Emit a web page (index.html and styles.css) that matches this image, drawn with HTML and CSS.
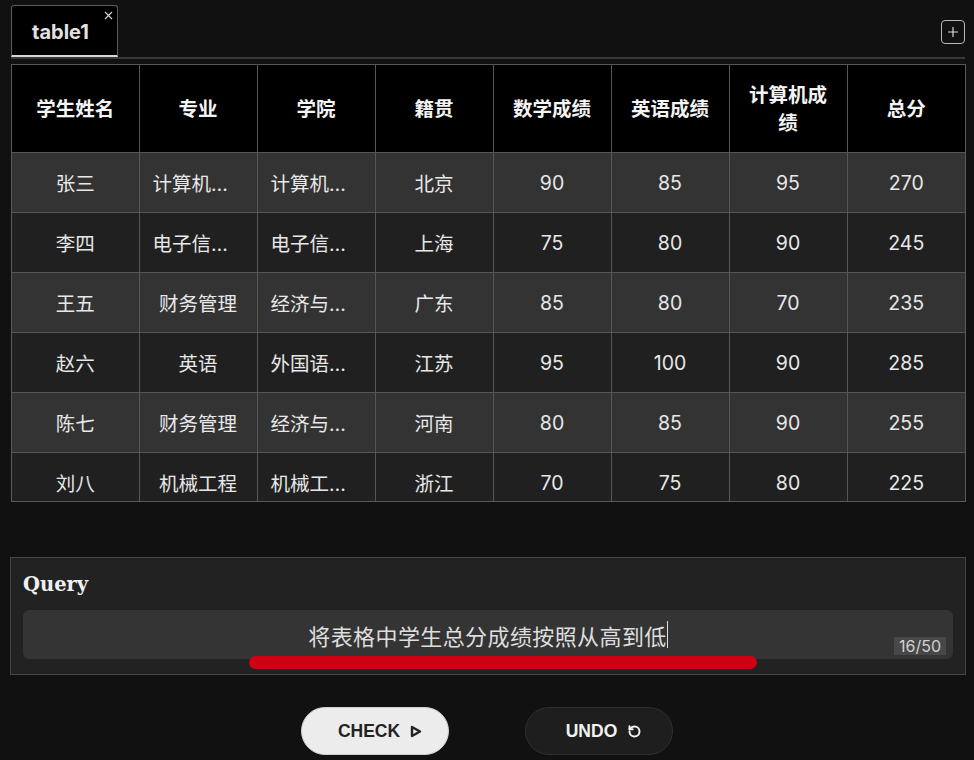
FILE: index.html
```html
<!DOCTYPE html>
<html lang="zh">
<head>
<meta charset="utf-8">
<title>table1</title>
<link rel="stylesheet" href="styles.css">
</head>
<body>
<div class="app">
  <div class="tabbar">
    <div class="tab">
      <span class="tab-title">table1</span>
      <span class="tab-close">
        <svg width="9" height="9" viewBox="0 0 9 9"><path d="M1 1L8 8M8 1L1 8" stroke="#cfcfcf" stroke-width="1.2" fill="none"/></svg>
      </span>
    </div>
    <div class="add-btn">
      <svg width="12" height="12" viewBox="0 0 12 12"><path d="M6 1V11M1 6H11" stroke="#d8d8d8" stroke-width="1.2" fill="none"/></svg>
    </div>
  </div>

  <div class="table-wrap">
    <table class="grid">
      <colgroup>
        <col class="c-first"><col><col><col><col><col><col><col>
      </colgroup>
      <thead>
        <tr><th>学生姓名</th><th>专业</th><th>学院</th><th>籍贯</th><th>数学成绩</th><th>英语成绩</th><th>计算机成绩</th><th>总分</th></tr>
      </thead>
      <tbody>
        <tr><td>张三</td><td>计算机科学与技术</td><td>计算机学院</td><td>北京</td><td>90</td><td>85</td><td>95</td><td>270</td></tr>
        <tr><td>李四</td><td>电子信息工程</td><td>电子信息学院</td><td>上海</td><td>75</td><td>80</td><td>90</td><td>245</td></tr>
        <tr><td>王五</td><td>财务管理</td><td>经济与管理学院</td><td>广东</td><td>85</td><td>80</td><td>70</td><td>235</td></tr>
        <tr><td>赵六</td><td>英语</td><td>外国语学院</td><td>江苏</td><td>95</td><td>100</td><td>90</td><td>285</td></tr>
        <tr><td>陈七</td><td>财务管理</td><td>经济与管理学院</td><td>河南</td><td>80</td><td>85</td><td>90</td><td>255</td></tr>
        <tr><td>刘八</td><td>机械工程</td><td>机械工程学院</td><td>浙江</td><td>70</td><td>75</td><td>80</td><td>225</td></tr>
      </tbody>
    </table>
  </div>

  <div class="query">
    <div class="query-label">Query</div>
    <div class="query-input">
      <span class="query-text">将表格中学生总分成绩按照从高到低</span><span class="caret"></span>
      <span class="counter">16/50</span>
    </div>
    <div class="redline"></div>
  </div>

  <div class="actions">
    <button class="btn btn-check">CHECK
      <svg width="12" height="13" viewBox="0 0 12 13"><path d="M2 2L10 6.5L2 11Z" stroke="#222" stroke-width="2.4" stroke-linejoin="round" fill="none"/></svg>
    </button>
    <button class="btn btn-undo">UNDO
      <svg width="15" height="15" viewBox="0 0 24 24"><path d="M4 12a8 8 0 1 0 8-8 8.6 8.6 0 0 0-6 2.4L4 8.5" stroke="#f2f2f2" stroke-width="3.2" stroke-linecap="round" stroke-linejoin="round" fill="none"/><path d="M4 3.5v5h5" stroke="#f2f2f2" stroke-width="3.2" stroke-linecap="round" stroke-linejoin="round" fill="none"/></svg>
    </button>
  </div>
</div>
</body>
</html>
```

FILE: styles.css
```css
* { box-sizing: border-box; }
html, body { margin: 0; padding: 0; }
body {
  background: #101110;
  color: #e8e8e8;
  font-family: "Inter", "Noto Sans CJK SC", sans-serif;
  width: 974px;
  height: 760px;
  overflow: hidden;
}
.app {
  padding: 0 9px 0 11px;
}
.tabbar {
  display: flex;
  justify-content: space-between;
  align-items: center;
  padding-top: 5px;
  height: 59px;
  border-bottom: 2px solid #383838;
}
.tab {
  align-self: flex-end;
  position: relative;
  width: 107px;
  height: 52px;
  background: #000;
  border: 1px solid #5c5c5c;
  border-bottom: 2px solid #d6d6d6;
  border-radius: 3px 3px 0 0;
  display: flex;
  align-items: center;
  justify-content: center;
}
.tab-title {
  font-size: 20px;
  font-weight: 700;
  color: #e2e2e2;
  margin-right: 8px;
  margin-top: 2px;
}
.tab-close {
  position: absolute;
  top: 5px;
  right: 4px;
  line-height: 0;
}
.add-btn {
  width: 24px;
  height: 24px;
  border: 1.5px solid #b8b8b8;
  border-radius: 4px;
  display: flex;
  align-items: center;
  justify-content: center;
  margin-top: 1px;
}
.table-wrap {
  margin-top: 5px;
  height: 438px;
  overflow: hidden;
  border: 1px solid #5a5a5a;
  border-top: none;
  width: 955px;
}
.grid {
  width: 953px;
  border-collapse: collapse;
  table-layout: fixed;
}
.grid col { width: 118px; }
.grid col.c-first { width: 127px; }
.grid th, .grid td {
  border: 1px solid #565656;
  text-align: center;
  vertical-align: middle;
  padding: 0 13px;
  font-size: 19.5px;
  overflow: hidden;
  text-overflow: ellipsis;
}
.grid tr > :first-child { border-left: none; }
.grid tr > :last-child { border-right: none; }
.grid th {
  background: #000;
  color: #f4f4f4;
  font-weight: 700;
  height: 88px;
  line-height: 28px;
}
.grid td {
  height: 60px;
  white-space: nowrap;
  color: #e8e8e8;
  font-weight: 400;
}
.grid tbody tr:nth-child(odd) td { background: #333333; }
.grid tbody tr:nth-child(even) td { background: #202020; }

.query {
  position: relative;
  margin: 55px 0 0 -1px;
  width: 956px;
  height: 118px;
  background: #222222;
  border: 1px solid #474747;
  padding: 12px 12px 14px;
}
.query-label {
  font-family: "DejaVu Serif", serif;
  font-weight: 700;
  font-size: 19.5px;
  line-height: 30px;
  color: #f0f0f0;
  margin-bottom: 10px;
}
.query-input {
  position: relative;
  height: 49px;
  background: #343434;
  border-radius: 6px;
  display: flex;
  align-items: center;
  justify-content: center;
}
.query-text {
  font-family: "Noto Sans CJK SC", sans-serif;
  font-size: 22px;
  color: #dedede;
  letter-spacing: 0.4px;
}
.caret {
  display: inline-block;
  width: 1px;
  height: 27px;
  background: #e0e0e0;
}
.counter {
  position: absolute;
  right: 7px;
  bottom: 4px;
  background: #474747;
  color: #d2d2d2;
  font-size: 16px;
  line-height: 18px;
  padding: 0 5px;
}
.redline {
  position: absolute;
  left: 238px;
  top: 98px;
  width: 508px;
  height: 13px;
  background: #cf0012;
  border-radius: 7px;
}
.actions {
  display: flex;
  justify-content: center;
  gap: 76px;
  margin-top: 32px;
  padding-right: 2px;
}
.btn {
  width: 148px;
  height: 48px;
  border-radius: 24px;
  font-family: "Liberation Sans", "Inter", sans-serif;
  font-weight: 700;
  font-size: 17.5px;
  display: flex;
  align-items: center;
  justify-content: center;
  gap: 10px;
  padding: 0 0 0 10px;
  cursor: pointer;
}
.btn svg { display: block; }
.btn-check {
  background: #ececec;
  color: #222;
  border: 1px solid #cfcfcf;
}
.btn-undo {
  background: #1e1e1e;
  color: #f2f2f2;
  border: 1px solid #2f2f2f;
}
```
